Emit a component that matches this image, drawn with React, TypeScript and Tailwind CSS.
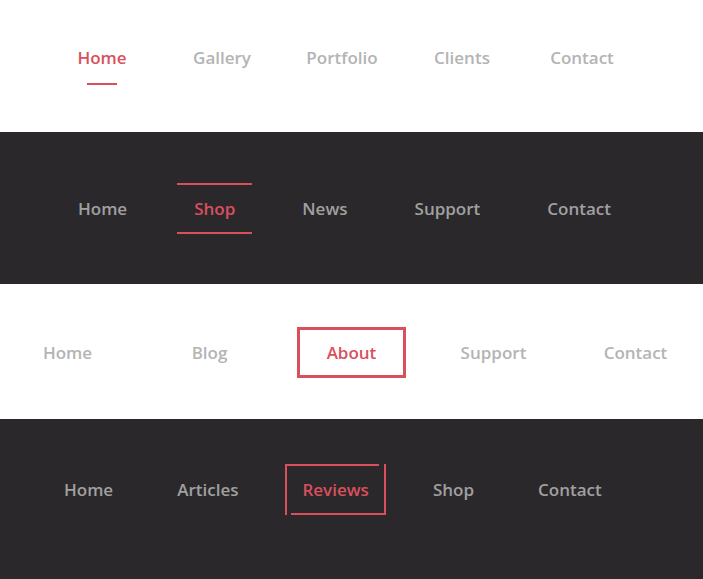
import React from 'react';

const font = { fontFamily: '"Open Sans", "Liberation Sans", sans-serif' };

const UnderlineNav = () => {
  const items = ['Home', 'Gallery', 'Portfolio', 'Clients', 'Contact'];
  return (
    <nav className="h-[132px] bg-white flex items-start pl-[42px] pt-[46px]">
      {items.map((label, i) => (
        <a key={label} href="#" className="w-[120px] flex flex-col items-center">
          <span className={`h-[24px] leading-[24px] text-[17px] font-semibold ${i === 0 ? 'text-[#d9505c]' : 'text-[#b4b4b4]'}`}>
            {label}
          </span>
          <span className={`mt-[13px] h-[2px] w-[30px] ${i === 0 ? 'bg-[#d9505c]' : 'bg-transparent'}`} />
        </a>
      ))}
    </nav>
  );
};

const LinedNav = () => {
  const items = ['Home', 'Shop', 'News', 'Support', 'Contact'];
  return (
    <nav className="h-[152px] bg-[#2a282b] flex items-start pl-[61px] pt-[51px] gap-[33px]">
      {items.map((label, i) => (
        <a
          key={label}
          href="#"
          className={`h-[51px] px-[17px] flex items-center border-y-2 text-[17px] font-semibold ${
            i === 1 ? 'border-[#d9505c] text-[#d9505c]' : 'border-transparent text-[#a0a0a0]'
          }`}
        >
          {label}
        </a>
      ))}
    </nav>
  );
};

const BoxedNav = () => {
  const items = ['Home', 'Blog', 'About', 'Support', 'Contact'];
  return (
    <nav className="h-[135px] bg-white flex justify-center items-start pt-[43px]">
      {items.map((label, i) => (
        <div key={label} className="w-[142px] shrink-0 flex justify-center">
          <a
            href="#"
            className={`h-[51px] px-[27px] flex items-center border-[3px] text-[17px] font-semibold ${
              i === 2 ? 'border-[#d9505c] text-[#d9505c]' : 'border-transparent text-[#b4b4b4]'
            }`}
          >
            {label}
          </a>
        </div>
      ))}
    </nav>
  );
};

const FramedNav = () => {
  const items = ['Home', 'Articles', 'Reviews', 'Shop', 'Contact'];
  return (
    <nav className="h-[160px] bg-[#2a282b] flex items-start pl-[47px] pt-[45px] gap-[30px]">
      {items.map((label, i) => (
        <a
          key={label}
          href="#"
          className={`relative h-[51px] px-[17px] flex items-center text-[17px] font-semibold ${
            i === 2 ? 'text-[#d9505c]' : 'text-[#a0a0a0]'
          }`}
        >
          {label}
          {i === 2 && (
            <>
              <span className="absolute left-0 top-0 h-[2px] w-[94px] bg-[#d9505c]" />
              <span className="absolute left-0 top-0 w-[2px] h-[51px] bg-[#d9505c]" />
              <span className="absolute right-0 top-0 w-[2px] h-[51px] bg-[#d9505c]" />
              <span className="absolute right-0 bottom-0 h-[2px] w-[95px] bg-[#d9505c]" />
            </>
          )}
        </a>
      ))}
    </nav>
  );
};

export default function App() {
  return (
    <div className="w-[703px] h-[579px] overflow-hidden" style={font}>
      <UnderlineNav />
      <LinedNav />
      <BoxedNav />
      <FramedNav />
    </div>
  );
}
